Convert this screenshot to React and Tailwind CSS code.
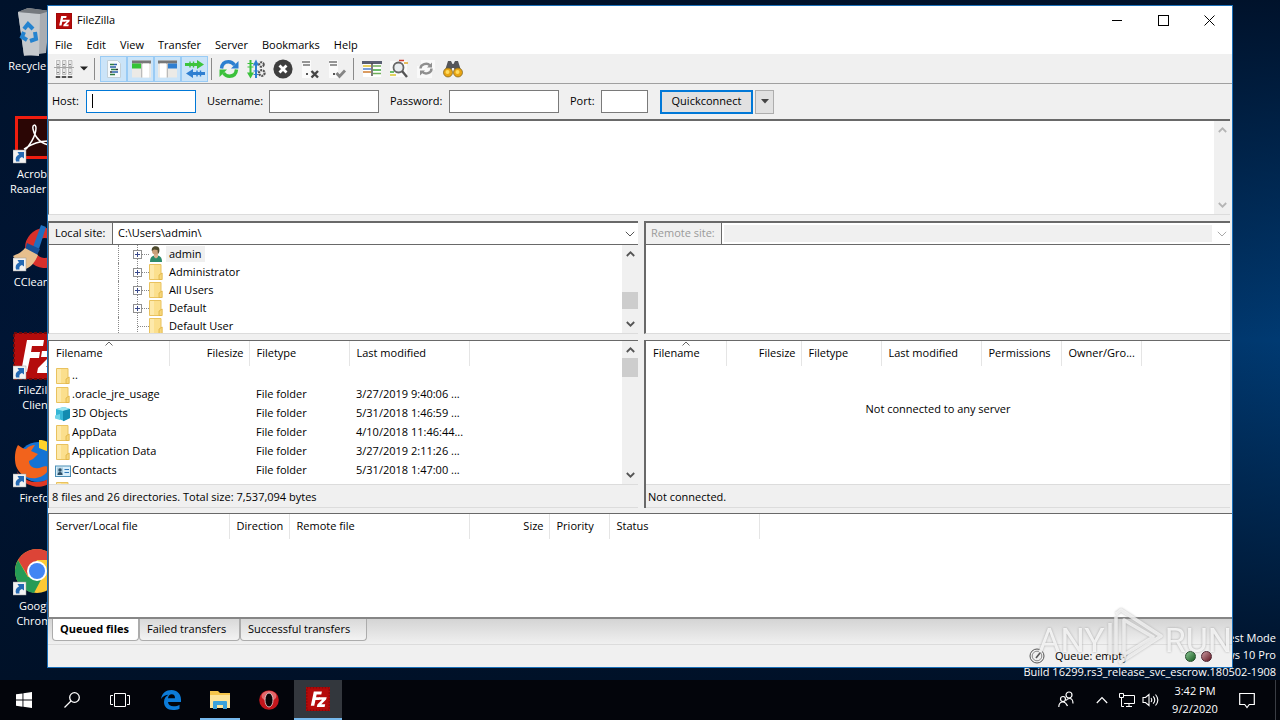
import { useState } from 'react';

const treeItems = [
  { name: 'admin', icon: 'user', expandable: true, selected: true },
  { name: 'Administrator', icon: 'folder', expandable: true },
  { name: 'All Users', icon: 'folder', expandable: true },
  { name: 'Default', icon: 'folder', expandable: true },
  { name: 'Default User', icon: 'folder', expandable: false },
];

const localFiles = [
  { name: '..', icon: 'folder', type: '', modified: '' },
  { name: '.oracle_jre_usage', icon: 'folder', type: 'File folder', modified: '3/27/2019 9:40:06 ...' },
  { name: '3D Objects', icon: 'cube', type: 'File folder', modified: '5/31/2018 1:46:59 ...' },
  { name: 'AppData', icon: 'folder', type: 'File folder', modified: '4/10/2018 11:46:44...' },
  { name: 'Application Data', icon: 'folder', type: 'File folder', modified: '3/27/2019 2:11:26 ...' },
  { name: 'Contacts', icon: 'contact', type: 'File folder', modified: '5/31/2018 1:47:00 ...' },
  { name: '', icon: 'folder', type: '', modified: '' },
];

const localColumns = [
  { label: 'Filename', width: 'w-[120px]', sorted: true },
  { label: 'Filesize', width: 'w-[80px]', right: true },
  { label: 'Filetype', width: 'w-[100px]' },
  { label: 'Last modified', width: 'w-[120px]' },
];

const remoteColumns = [
  { label: 'Filename', width: 'w-[80px]', sorted: true },
  { label: 'Filesize', width: 'w-[75px]', right: true },
  { label: 'Filetype', width: 'w-[80px]' },
  { label: 'Last modified', width: 'w-[100px]' },
  { label: 'Permissions', width: 'w-[80px]' },
  { label: 'Owner/Gro...', width: 'w-[80px]' },
];

const queueColumns = [
  { label: 'Server/Local file', width: 'w-[180px]' },
  { label: 'Direction', width: 'w-[60px]' },
  { label: 'Remote file', width: 'w-[180px]' },
  { label: 'Size', width: 'w-[80px]', right: true },
  { label: 'Priority', width: 'w-[60px]' },
  { label: 'Status', width: 'w-[150px]' },
];

/* ---------- small icons ---------- */

const FileZillaIcon = ({ className }) => (
  <svg viewBox="0 0 16 16" className={className}>
    <rect width="16" height="16" fill="#b50a0a" />
    <rect x=".5" y=".5" width="15" height="15" fill="none" stroke="#8c0606" strokeDasharray="1 1" />
    <path d="M3.2 12.5 5.2 3h5.4l-.4 2H7.1l-.4 1.8h2.6l-.4 1.9H6.3l-.8 3.8z" fill="#fff" />
    <path d="M8.8 6.8h5l-.4 1.6-3.2 3.1h2.6l-.4 1.8H7.2l.4-1.7 3.1-3.1H8.4z" fill="#fff" />
  </svg>
);

const FolderIcon = () => (
  <svg viewBox="0 0 14 16" className="h-4 w-3.5 shrink-0">
    <path d="M.5.5H12v15H.5z" fill="#fbdf8d" stroke="#e9c25f" />
    <path d="M1 1h4v14H1z" fill="#fde9ab" />
    <path d="M13.2 9v6.5H10V11z" fill="#f6d67a" stroke="#dfb343" strokeWidth=".8" />
  </svg>
);

const UserIcon = () => (
  <svg viewBox="0 0 14 16" className="h-4 w-3.5 shrink-0">
    <path d="M1 16c0-5 2-6.500 6-6.500s6 1.500 6 6.500z" fill="#2d8a6b" />
    <path d="M5 8h4v3L7 12.500 5 11z" fill="#d9b18c" />
    <circle cx="6.500" cy="5" r="3.500" fill="#c99f79" />
    <path d="M2.800 5C2.300 1.500 4.500 0 7 .2c3 .2 4 2.500 3.200 5.800L9 8l-.5-4L5 3.500z" fill="#4d4a2c" />
  </svg>
);

const CubeIcon = () => (
  <svg viewBox="0 0 16 16" className="h-4 w-4 shrink-0">
    <path d="m1 3 8-2 6 2v9l-6 3-8-3z" fill="#35b6d6" />
    <path d="m1 3 8-2 6 2-7 2z" fill="#9ce5f2" />
    <path d="M8 5v10.300L15 12V3z" fill="#138bb0" />
    <path d="M0 9.500 5 8v6l-5-1.500z" fill="#6fd3e8" />
  </svg>
);

const ContactIcon = () => (
  <svg viewBox="0 0 16 16" className="h-4 w-4 shrink-0">
    <rect x=".5" y="3" width="15" height="10.500" fill="#d9effa" stroke="#4c8fb5" />
    <rect x="2" y="4.500" width="6" height="7.500" fill="#a9cbdd" />
    <circle cx="5" cy="7" r="1.700" fill="#2d4f66" />
    <path d="M2.500 12c0-2 1-3 2.500-3s2.500 1 2.500 3z" fill="#2d4f66" />
    <path d="M9.500 6.500h4.500M9.500 9.500h4.500" stroke="#2d78b8" strokeWidth="1.200" />
  </svg>
);

const icons = { folder: FolderIcon, user: UserIcon, cube: CubeIcon, contact: ContactIcon };

const Chevron = ({ up, color = '#555' }) => (
  <svg viewBox="0 0 9 6" className="h-1.5 w-[9px]" fill="none" stroke={color} strokeWidth="1.800">
    <path d={up ? 'M.8 5 4.500 1.300 8.200 5' : 'M.8 1 4.500 4.700 8.200 1'} />
  </svg>
);

const ThinChevron = ({ color = '#555' }) => (
  <svg viewBox="0 0 10 6" className="h-1.5 w-2.5" fill="none" stroke={color}>
    <path d="m.8.8 4.200 4.200L9.200.8" />
  </svg>
);

/* ---------- toolbar ---------- */

const SiteManagerIcon = () => (
  <svg viewBox="0 0 20 20" className="size-5">
    <path d="M1 .5h18v16H1z" fill="#fafafa" />
    <g fill="#e6e6e6" stroke="#a8a8a8" strokeWidth=".7">
      <path d="M2.500 1.500h3.500v6H2.500zM8.500 1.500H12v6H8.500zM14.500 1.500H18v6h-3.500zM2.500 9.500h3.500v6H2.500zM8.500 9.500H12v6H8.500zM14.500 9.500H18v6h-3.500z" />
    </g>
    <path d="M0 8.500h20M1 18h18" stroke="#a5a5a5" />
    <path d="M2 17h4v2H2zM8 17h4v2H8zM14 17h4v2h-4z" fill="#555" />
    <path d="M3 5.500h2M9 5.500h2M15 5.500h2M3 13.500h2M9 13.500h2M15 13.500h2" stroke="#888" />
  </svg>
);

const LogIcon = () => (
  <svg viewBox="0 0 20 20" className="size-5">
    <path d="M3.500 1.500h10l3 3v14h-13z" fill="#f6fafc" stroke="#c3d0d8" />
    <g strokeWidth="1.400">
      <path d="M6 5.500h4M7 10.500h5M6 15.500h5" stroke="#2c7a3f" />
      <path d="M10 5.500h3M6 8h6M8 13h6" stroke="#2d5fa8" />
      <path d="M6 13h2M12 10.500h2" stroke="#333" />
    </g>
  </svg>
);

const LocalTreeIcon = () => (
  <svg viewBox="0 0 20 20" className="size-5">
    <rect x="1" y="1.500" width="19" height="17" fill="#eceae6" />
    <path d="M1 1.500h19v3H1z" fill="#777" />
    <path d="M1 4.500h9v5H1z" fill="#35c435" />
    <path d="M12 4.500h6v14h-6z" fill="#fff" />
    <path d="M10.500 4.500v14" stroke="#bbb" />
  </svg>
);

const RemoteTreeIcon = () => (
  <svg viewBox="0 0 20 20" className="size-5">
    <rect x="0" y="1.500" width="19" height="17" fill="#eceae6" />
    <path d="M0 1.500h19v3H0z" fill="#777" />
    <path d="M10 4.500h9v5h-9z" fill="#2f7fd1" />
    <path d="M2 4.500h6v14H2z" fill="#fff" />
    <path d="M9.500 4.500v14" stroke="#bbb" />
  </svg>
);

const QueueIcon = () => (
  <svg viewBox="0 0 20 20" className="size-5">
    <path d="M0 4h12V1l7 4.500-7 4.500V7H0z" fill="#3cc43c" />
    <path d="M20 13H8v-3l-7 4.500L8 19v-3h12z" fill="#2f7fd1" />
    <path d="M5 2.500v6M8.500 2.500v6" stroke="#3cc43c" strokeWidth="1.400" />
    <path d="M12 11.500v6M15.500 11.500v6" stroke="#2f7fd1" strokeWidth="1.400" />
  </svg>
);

const RefreshIcon = () => (
  <svg viewBox="0 0 20 20" className="size-5" fill="none" strokeWidth="3.400">
    <path d="M2.500 9.500C3 4.500 6 2.800 9.500 2.800c2.500 0 4.500 1.200 6 3.200" stroke="#2b7fd0" />
    <path d="M19.500 2v7.500H12z" fill="#2b7fd0" />
    <path d="M17.500 10.500c-.5 5-3.500 6.700-7 6.700-2.500 0-4.500-1.200-6-3.200" stroke="#3bc13b" />
    <path d="M.5 18v-7.500H8z" fill="#3bc13b" />
  </svg>
);

const ProcessIcon = () => (
  <svg viewBox="0 0 20 20" className="size-5">
    <path d="M3.500 1h2v12.500H8L4.500 19.500 1 13.500h2.500z" fill="#3bc13b" />
    <path d="M9 19V6.500H6.800L10 .5l3 6h-2V19z" fill="#2b7fd0" />
    <path d="M1.500 4.500h6M1.500 8h6" stroke="#3bc13b" />
    <path d="M7.500 12h5M7.500 15.500h5" stroke="#2b7fd0" />
    <circle cx="15.500" cy="5.500" r="2.300" fill="none" stroke="#555" strokeWidth="2" strokeDasharray="2 .8" />
    <circle cx="15.800" cy="14" r="2.800" fill="none" stroke="#555" strokeWidth="2.200" strokeDasharray="2 .8" />
  </svg>
);

const CancelIcon = () => (
  <svg viewBox="0 0 20 20" className="size-5">
    <circle cx="10" cy="10" r="9.600" fill="#3e3e3e" />
    <path d="m6.500 6.500 7 7m0-7-7 7" stroke="#fff" strokeWidth="2.800" />
  </svg>
);

const DisconnectIcon = () => (
  <svg viewBox="0 0 20 20" className="size-5">
    <path d="M2 1h9v18H2z" fill="#fbfbfb" />
    <path d="M2 3h8M3 6h7" stroke="#777" strokeWidth="1.400" />
    <path d="M6 15h2" stroke="#555" strokeWidth="2" />
    <path d="m11.500 12 6.500 6.500m0-6.500-6.500 6.500" stroke="#444" strokeWidth="2.400" />
  </svg>
);

const ReconnectIcon = () => (
  <svg viewBox="0 0 20 20" className="size-5">
    <path d="M2 1h9v18H2z" fill="#fbfbfb" />
    <path d="M2 3h8M3 6h7" stroke="#777" strokeWidth="1.400" />
    <path d="M6 15h2" stroke="#555" strokeWidth="2" />
    <path d="m9.500 14 3 3.500 5.500-6" fill="none" stroke="#858585" strokeWidth="2.800" />
  </svg>
);

const FilterIcon = () => (
  <svg viewBox="0 0 20 20" className="size-5">
    <path d="M1 3h18v15H1z" fill="#fff" />
    <path d="M0 2h20v3H0z" fill="#5a5f72" />
    <path d="M1 7h8" stroke="#e2c32b" strokeWidth="1.500" />
    <path d="M1 10h8" stroke="#4d7fd0" strokeWidth="1.500" />
    <path d="M1 13h8" stroke="#cf7b2e" strokeWidth="1.500" />
    <path d="M11 7h8M11 14.500h8" stroke="#6fae5a" strokeWidth="1.500" />
    <path d="M11 11h8" stroke="#3ba83b" strokeWidth="1.500" />
    <path d="M10 4v13" stroke="#444" strokeWidth="1.400" />
  </svg>
);

const CompareIcon = () => (
  <svg viewBox="0 0 20 20" className="size-5">
    <path d="M1 2h17v16H1z" fill="#fafafa" />
    <path d="M10 1.500h5" stroke="#d33b2c" strokeWidth="1.500" />
    <path d="M15 4h4" stroke="#e0a92c" strokeWidth="1.500" />
    <path d="M1 13h4" stroke="#3ba83b" strokeWidth="1.500" />
    <path d="M1 16h6" stroke="#d8c52c" strokeWidth="1.500" />
    <circle cx="9.500" cy="8.500" r="5" fill="#e9edf0" stroke="#666" strokeWidth="1.800" />
    <path d="m13 12 5 6" stroke="#555" strokeWidth="2.400" />
  </svg>
);

const SyncIcon = () => (
  <svg viewBox="0 0 20 20" className="size-5" fill="none">
    <path d="M5 1h14v10h-3v8H1V7h4z" fill="#f9f9f9" />
    <path d="M4.500 9.500c0-4 6.500-6.500 9.500-3M15.500 9.500c0 5-6.500 6.500-9.500 3" stroke="#8f8f8f" strokeWidth="2.400" />
    <path d="M16 3.500v5h-5zM4 16.500v-5h5z" fill="#8f8f8f" />
  </svg>
);

const SearchIcon = () => (
  <svg viewBox="0 0 20 20" className="size-5">
    <path d="M5 2h3l1.500 3h1L12 2h3l3.500 11H12l-1-4H9l-1 4H1.500z" fill="#55565a" />
    <circle cx="5" cy="13.500" r="4.500" fill="#e8a413" stroke="#77601f" strokeWidth=".7" />
    <circle cx="15" cy="13.500" r="4.500" fill="#e8a413" stroke="#77601f" strokeWidth=".7" />
    <circle cx="4.500" cy="13" r="2" fill="#ffdc5e" />
    <circle cx="14.500" cy="13" r="2" fill="#ffdc5e" />
  </svg>
);

const toggles = [
  { label: 'Message log', Icon: LogIcon },
  { label: 'Local directory tree', Icon: LocalTreeIcon },
  { label: 'Remote directory tree', Icon: RemoteTreeIcon },
  { label: 'Transfer queue', Icon: QueueIcon },
];

const actions = [
  { label: 'Refresh', Icon: RefreshIcon },
  { label: 'Process queue', Icon: ProcessIcon },
  { label: 'Cancel', Icon: CancelIcon },
  { label: 'Disconnect', Icon: DisconnectIcon },
  { label: 'Reconnect', Icon: ReconnectIcon },
];

const tools = [
  { label: 'Filters', Icon: FilterIcon },
  { label: 'Directory comparison', Icon: CompareIcon },
  { label: 'Synchronized browsing', Icon: SyncIcon },
  { label: 'Find files', Icon: SearchIcon },
];

const ToolButton = ({ label, Icon }) => (
  <button aria-label={label} className="flex h-full w-[27px] items-center justify-center hover:bg-[#d8e6f2]">
    <Icon />
  </button>
);

const Toolbar = () => {
  const [active, setActive] = useState(toggles.map((t) => t.label));

  const toggle = (label) =>
    setActive(active.includes(label) ? active.filter((l) => l !== label) : [...active, label]);

  return (
    <div className="flex h-[30px] shrink-0 items-center border-b border-[#a0a0a0] bg-[#f0f0f0] py-0.5 pl-1.5">
      <button aria-label="Site Manager" className="flex h-full items-center gap-1.5">
        <SiteManagerIcon />
        <svg viewBox="0 0 8 5" className="h-[5px] w-2">
          <path d="M0 .5h8L4 4.500z" fill="#222" />
        </svg>
      </button>
      <div className="ml-1.5 mr-[5px] h-[22px] w-px bg-[#8a8a8a]" />
      {toggles.map(({ label, Icon }) => (
        <button
          key={label}
          aria-label={label}
          aria-pressed={active.includes(label)}
          onClick={() => toggle(label)}
          className={`flex h-[26px] w-[27px] items-center justify-center ${active.includes(label) ? 'border border-[#99cbf5] bg-[#cbe4f8]' : ''
            }`}
        >
          <Icon />
        </button>
      ))}
      <div className="mx-[3px] h-[22px] w-px bg-[#8a8a8a]" />
      {actions.map((a) => (
        <ToolButton key={a.label} {...a} />
      ))}
      <div className="ml-[3px] mr-1 h-[22px] w-px bg-[#8a8a8a]" />
      {tools.map((t) => (
        <ToolButton key={t.label} {...t} />
      ))}
    </div>
  );
};

const QuickConnect = () => {
  const [host, setHost] = useState('');

  return (
    <form className="flex h-[35px] shrink-0 items-center bg-[#f0f0f0] pl-1" onSubmit={(e) => e.preventDefault()}>
      <label htmlFor="host" className="w-[34px]">Host:</label>
      <div className="relative">
        <input
          id="host"
          value={host}
          onChange={(e) => setHost(e.target.value)}
          className="block h-[23px] w-[110px] border border-[#0078d7] bg-white px-1 outline-none"
        />
        {/* text cursor */}
        {!host && <span className="pointer-events-none absolute left-1.5 top-1 h-3.5 w-px bg-black" />}
      </div>
      <label htmlFor="username" className="ml-[11px] w-[62px]">Username:</label>
      <input id="username" className="h-[23px] w-[110px] border border-[#7a7a7a] bg-white px-1 outline-none" />
      <label htmlFor="password" className="ml-[11px] w-[59px]">Password:</label>
      <input id="password" type="password" className="h-[23px] w-[110px] border border-[#7a7a7a] bg-white px-1 outline-none" />
      <label htmlFor="port" className="ml-[11px] w-[31px]">Port:</label>
      <input id="port" className="h-[23px] w-[47px] border border-[#7a7a7a] bg-white px-1 outline-none" />
      <button type="submit" className="ml-3 h-6 w-[93px] border-2 border-[#0078d7] bg-[#e1e1e1]">
        Quickconnect
      </button>
      <button type="button" aria-label="Recent servers" className="ml-0.5 flex h-6 w-[19px] items-center justify-center border border-[#adadad] bg-[#e1e1e1]">
        <svg viewBox="0 0 8 5" className="h-[5px] w-2">
          <path d="M0 0h8L4 4.500z" fill="#444" />
        </svg>
      </button>
    </form>
  );
};

/* ---------- panes ---------- */

// thumb is a height + top margin pair, given by the caller as classes
const Scrollbar = ({ thumb, disabled }) => (
  <div className="flex w-4 shrink-0 flex-col items-center justify-between bg-[#f0f0f0] py-1.5">
    <Chevron up color={disabled ? '#b5b5b5' : '#555'} />
    {thumb && (
      <div className="flex w-full flex-1 flex-col">
        <div className={`w-full bg-[#cdcdcd] ${thumb}`} />
      </div>
    )}
    <Chevron color={disabled ? '#b5b5b5' : '#555'} />
  </div>
);

const HeaderRow = ({ columns }) => (
  <thead>
    <tr className="h-[25px]">
      {columns.map((c) => (
        <th
          key={c.label}
          className={`relative border-r border-[#e5e5e5] pl-[7px] pr-[5px] font-normal ${c.width} ${c.right ? 'text-right' : 'text-left'}`}
        >
          {c.sorted && (
            <svg viewBox="0 0 8 5" className="absolute left-1/2 top-0 h-[5px] w-2 -translate-x-1/2" fill="none" stroke="#666">
              <path d="M.5 4.500 4 1l3.500 3.500" />
            </svg>
          )}
          {c.label}
        </th>
      ))}
    </tr>
  </thead>
);

const SiteTree = () => (
  <ul className="flex-1 overflow-hidden pl-[69px]">
    {treeItems.map(({ name, icon, expandable, selected }) => {
      const Icon = icons[icon];
      return (
        <li key={name} className="flex h-[18px] items-center border-l border-dotted border-[#888] pl-3.5">
          <svg viewBox="0 0 16 18" className="h-[18px] w-4 shrink-0" fill="none">
            <path d="M4.500 0v18M5 9.500h11" stroke="#888" strokeDasharray="1 1" />
            {expandable && (
              <>
                <rect x=".5" y="5.500" width="8" height="8" fill="#fff" stroke="#919191" />
                <path d="M2 9.500h5M4.500 7v5" stroke="#3a4a8c" />
              </>
            )}
          </svg>
          <Icon />
          <span className={`ml-[3px] px-[3px] leading-4 ${selected ? 'bg-[#f0f0f0]' : ''}`}>{name}</span>
        </li>
      );
    })}
  </ul>
);

const LocalPane = () => (
  <section className="flex min-w-0 flex-col gap-1.5">
    <div className="flex h-[113px] flex-col border-b border-l border-t-2 border-b-[#dcdcdc] border-l-[#696969] border-t-[#696969] bg-white">
      <div className="flex h-[22px] shrink-0 items-stretch border-b border-[#696969]">
        <label htmlFor="localSite" className="flex w-16 items-center border-r border-[#696969] bg-[#f0f0f0] pl-1.5">
          Local site:
        </label>
        <input id="localSite" defaultValue="C:\Users\admin\" className="min-w-0 flex-1 px-[5px] outline-none" />
        <button aria-label="Show path history" className="flex w-4 items-center justify-center">
          <ThinChevron />
        </button>
      </div>
      <div className="flex min-h-0 flex-1">
        <SiteTree />
        <Scrollbar thumb="mt-[35px] h-[17px]" />
      </div>
    </div>
    <div className="flex h-[168px] flex-col border-l border-t border-[#696969] bg-white">
      <div className="flex min-h-0 flex-1">
        <div className="min-w-0 flex-1 overflow-hidden">
          <table className="w-[420px] table-fixed border-collapse">
            <HeaderRow columns={localColumns} />
            <tbody>
              {localFiles.map((file, i) => {
                const Icon = icons[file.icon];
                return (
                  <tr key={i} className="h-[19px]">
                    <td className="p-0 pl-1">
                      <div className="flex h-[19px] items-center whitespace-nowrap">
                        <span className="flex w-[19px] justify-center"><Icon /></span>
                        {file.name}
                      </div>
                    </td>
                    <td />
                    <td className="p-0 pl-[7px]">{file.type}</td>
                    <td className="whitespace-nowrap p-0 pl-[7px]">{file.modified}</td>
                  </tr>
                );
              })}
            </tbody>
          </table>
        </div>
        <Scrollbar thumb="mt-[5px] h-[19px]" />
      </div>
      <div className="flex h-6 shrink-0 items-center border-y border-[#dcdcdc] bg-[#f0f0f0] pl-[3px] pt-0.5">
        8 files and 26 directories. Total size: 7,537,094 bytes
      </div>
    </div>
  </section>
);

const RemotePane = () => (
  <section className="flex min-w-0 flex-col gap-1.5">
    <div className="flex h-[113px] flex-col border-b border-l-2 border-t-2 border-b-[#dcdcdc] border-l-[#696969] border-t-[#696969] bg-white">
      <div className="flex h-[22px] shrink-0 items-stretch border-b border-[#696969]">
        <label htmlFor="remoteSite" className="flex w-[76px] items-center border-r border-[#696969] bg-[#f0f0f0] pl-[5px] text-[#9a9a9a]">
          Remote site:
        </label>
        <div className="flex flex-1 p-0.5">
          <input id="remoteSite" disabled className="min-w-0 flex-1 bg-[#f0f0f0]" />
        </div>
        <button disabled aria-label="Show remote history" className="flex w-4 items-center justify-center">
          <ThinChevron color="#aaa" />
        </button>
      </div>
    </div>
    <div className="flex h-[168px] flex-col border-l-2 border-t border-[#696969] bg-white">
      <div className="flex min-h-0 flex-1 flex-col">
        <table className="w-[495px] table-fixed border-collapse">
          <HeaderRow columns={remoteColumns} />
        </table>
        <p className="pt-[35px] text-center leading-4">Not connected to any server</p>
      </div>
      <div className="flex h-6 shrink-0 items-center border-y border-[#dcdcdc] bg-[#f0f0f0] pl-0.5 pt-0.5">
        Not connected.
      </div>
    </div>
  </section>
);

const queueTabs = [
  { label: 'Queued files', width: 'w-[87px]' },
  { label: 'Failed transfers', width: 'w-[101px]' },
  { label: 'Successful transfers', width: 'w-[127px]' },
];

const QueuePane = () => {
  const [tab, setTab] = useState('Queued files');

  return (
    <section className="mt-[5px] flex min-h-0 flex-1 flex-col">
      <div className="flex-1 border-l border-t border-[#696969] bg-white">
        <table className="w-[710px] table-fixed border-collapse">
          <HeaderRow columns={queueColumns} />
        </table>
      </div>
      <div className="flex h-7 items-start border-b border-t-2 border-b-[#dcdcdc] border-t-[#868686] bg-linear-to-b from-[#d4d4d4] to-[#f0f0f0] pl-1">
        {queueTabs.map(({ label, width }) => (
          <button
            key={label}
            onClick={() => setTab(label)}
            className={`h-[22px] rounded-b-sm border border-t-0 border-[#acacac] pl-[7px] text-left ${width} ${tab === label ? 'bg-white font-bold' : 'bg-linear-to-b from-[#d9d9d9] to-[#f3f3f3]'
              }`}
          >
            {label}
          </button>
        ))}
      </div>
    </section>
  );
};

const Watermark = () => (
  <div className="pointer-events-none absolute bottom-0 right-0 flex h-[60px] items-center gap-0.5 text-[34px] leading-none text-white/80">
    <span className="pt-1.5 font-['Roboto'] drop-shadow-[0_0_1px_#999]">ANY</span>
    <svg viewBox="0 0 56 60" className="h-[60px] w-14 drop-shadow-[0_0_1px_#999]" fill="none" stroke="#fff" strokeOpacity=".7" strokeWidth="3.500" strokeLinejoin="round">
      <path d="M3 16v32M9 10v38M9 7l5-4 40 26-42 27M17 50V13l29 17-29 18" />
    </svg>
    <span className="pt-1.5 font-['Roboto'] drop-shadow-[0_0_1px_#999]">RUN</span>
  </div>
);

const FileZillaWindow = () => (
  <main className="absolute inset-x-[47px] bottom-3 top-[5px] flex flex-col border border-[#1a6fb8] bg-[#f0f0f0] text-black">
    <header className="flex h-[29px] shrink-0 items-center bg-white pl-2">
      <FileZillaIcon className="size-4" />
      <h1 className="ml-[5px] flex-1">FileZilla</h1>
      <button aria-label="Minimize" className="flex h-full w-[45px] items-center justify-center">
        <svg viewBox="0 0 11 11" className="size-[11px]" stroke="#000"><path d="M0 5.500h10" /></svg>
      </button>
      <button aria-label="Maximize" className="flex h-full w-[46px] items-center justify-center">
        <svg viewBox="0 0 11 11" className="size-[11px]" fill="none" stroke="#000"><rect x=".5" y=".5" width="10" height="10" /></svg>
      </button>
      <button aria-label="Close" className="flex h-full w-[46px] items-center justify-center">
        <svg viewBox="0 0 11 11" className="size-[11px]" stroke="#000"><path d="m.5.500 10 10m0-10-10 10" /></svg>
      </button>
    </header>
    <nav className="flex h-[19px] shrink-0 items-center gap-3.5 bg-white pl-[7px] pt-0.5">
      {['File', 'Edit', 'View', 'Transfer', 'Server', 'Bookmarks', 'Help'].map((item) => (
        <button key={item}>{item}</button>
      ))}
    </nav>
    <Toolbar />
    <QuickConnect />
    <div className="mr-0.5 flex h-24 shrink-0 border-b border-l border-t-2 border-b-[#dcdcdc] border-l-[#696969] border-t-[#696969] bg-white">
      <div className="flex-1" role="log" />
      <Scrollbar disabled />
    </div>
    <div className="mr-0.5 mt-1.5 grid grid-cols-[590fr_586fr] gap-1.5">
      <LocalPane />
      <RemotePane />
    </div>
    <QueuePane />
    <footer className="flex h-[22px] shrink-0 items-center justify-end pr-2">
      <svg viewBox="0 0 16 16" className="size-4" fill="none" stroke="#555">
        <circle cx="8" cy="8" r="7" />
        <circle cx="8" cy="8" r="4.800" stroke="#888" />
        <path d="m7 10 4-5" strokeWidth="1.600" />
      </svg>
      <span className="ml-2.5 w-[130px]">Queue: empty</span>
      <span className="size-[11px] rounded-full border border-[#244d2b] bg-linear-to-br from-[#8ac694] to-[#145c20]" />
      <span className="ml-[5px] mr-3 size-[11px] rounded-full border border-[#4d2430] bg-linear-to-br from-[#c99aa2] to-[#611424]" />
    </footer>
    <Watermark />
  </main>
);

/* ---------- desktop ---------- */

const desktopIcons = [
  {
    lines: ['Recycle Bin'],
    art: (
      <>
        <path d="m5 4 10-4 22 3-4 42-22 3z" fill="#a9adb2" />
        <path d="m5 4 22 2-1 42-15-1z" fill="#c5c9cd" />
        <path d="m5 4 10-4 22 3-10 3z" fill="#75797e" />
        <path d="m11 21 4-5 5 5M22 24l1 7-6 2M14 32l-5-3 2-5" fill="none" stroke="#2583cf" strokeWidth="4" />
      </>
    ),
  },
  {
    lines: ['Acrobat', 'Reader DC'],
    shortcut: true,
    art: (
      <>
        <rect x="3.500" y="1.500" width="42" height="40" fill="#2b0605" stroke="#f01d0f" strokeWidth="3" />
        <path d="M10 36c6-5 13-16 13-24 0-4-4-4-3 1 2 9 9 16 18 16 5-1 3-4-3-4-9 0-18 4-24 8" fill="none" stroke="#fff" strokeWidth="1.500" />
      </>
    ),
  },
  {
    lines: ['CCleaner'],
    shortcut: true,
    art: (
      <>
        <path d="M44 8A20 20 0 1 0 44 40l-8-7a10 10 0 1 1 0-18z" fill="#d8302b" />
        <path d="m28 1 5 2-7 22-6-2z" fill="#1f6fc0" />
        <path d="m14 19 13 6-3 6-12-5z" fill="#174f96" />
        <path d="M12 24c-4 5-8 6-12 8l10 14c8-2 12-8 15-15z" fill="#e7bf8d" />
      </>
    ),
  },
  {
    lines: ['FileZilla', 'Client'],
    shortcut: true,
    art: (
      <>
        <rect x="1" y="1" width="46" height="46" fill="#b40c0c" stroke="#6f0a0a" strokeWidth="2" strokeDasharray="3 2" />
        <path d="m8 40 6-32h17l-1 6H19l-1 6h9l-1 6h-9l-3 14z" fill="#fff" />
        <path d="M29 19h15l-1 5-10 11h8l-1 6H24l1-5 11-11h-8z" fill="#fff" />
      </>
    ),
  },
  {
    lines: ['Firefox'],
    shortcut: true,
    art: (
      <>
        <circle cx="25" cy="22" r="20" fill="#1473d4" />
        <path d="M26 0c10-1 21 10 19 24l-9-12-10-4z" fill="#ffd32a" />
        <path d="M5 5c3 2 5 4 8 4 3-3 6-4 9-4l-4 6 7 3-5 5-4 2c0 6 6 9 13 6 5-2 9 1 5 5-8 10-26 8-31-6C1 18 2 10 5 5z" fill="#f2631c" />
        <path d="M4 31c6 10 17 13 27 10 7-3 12-9 13-16 4 16-14 26-27 20C11 43 6 39 4 31z" fill="#e03824" />
      </>
    ),
  },
  {
    lines: ['Google', 'Chrome'],
    shortcut: true,
    art: (
      <>
        <circle cx="24" cy="23" r="22" fill="#fcc934" />
        <path d="M5 12a22 22 0 0 1 38 0H24l-9 16z" fill="#dc4437" />
        <path d="M5 12a22 22 0 0 0 16 33l9-17-15 1z" fill="#259b56" />
        <circle cx="24" cy="23" r="10" fill="#fff" />
        <circle cx="24" cy="23" r="8" fill="#4285f4" />
      </>
    ),
  },
];

const DesktopIcons = () => (
  <ul className="flex w-[74px] flex-col pt-2">
    {desktopIcons.map(({ lines, art, shortcut }) => (
      <li key={lines[0]} className="flex h-[108px] flex-col items-center">
        <svg viewBox="0 0 48 48" className="size-12 shrink-0">
          {art}
          {shortcut && (
            <>
              <rect x="0" y="34" width="13" height="13" fill="#f2f2f2" stroke="#999" strokeWidth=".5" />
              <path d="M3 45.500c-1-3.500 0-5.500 3-7L4.500 36H11v6.500L9 41c-2.500 1-3 2-2.500 4.500z" fill="#2469b3" />
            </>
          )}
        </svg>
        <div className="pt-0.5 text-center leading-[15px] whitespace-nowrap">
          {lines.map((line) => (
            <div key={line}>{line}</div>
          ))}
        </div>
      </li>
    ))}
  </ul>
);

const Taskbar = () => (
  <footer className="flex h-10 shrink-0 items-stretch bg-[#03050b]">
    <button aria-label="Start" className="flex w-12 items-center justify-center">
      <svg viewBox="0 0 16 16" className="size-4" fill="#fff">
        <path d="m0 2.300 6.500-.9v6.200H0zM7.400 1.300 16 0v7.600H7.400zM0 8.500h6.500v6.200L0 13.800zM7.400 8.500H16V16l-8.600-1.200z" />
      </svg>
    </button>
    <button aria-label="Search" className="flex w-12 items-center justify-center">
      <svg viewBox="0 0 16 16" className="size-4" fill="none" stroke="#fff" strokeWidth="1.300">
        <circle cx="10.500" cy="5.500" r="4.800" />
        <path d="M7 9 .5 15.500" />
      </svg>
    </button>
    <button aria-label="Task view" className="flex w-12 items-center justify-center">
      <svg viewBox="0 0 20 16" className="h-4 w-5" fill="none" stroke="#fff">
        <path d="M4.500 1.500h11v13h-11zM3 3.500H.5v9H3M17 3.500h2.500v9H17" />
      </svg>
    </button>
    <button aria-label="Microsoft Edge" className="ml-[3px] flex w-12 items-center justify-center">
      <svg viewBox="0 0 20 20" className="size-5">
        <path d="M0 9C1 3 5 0 10.500 0 16 0 20 4 20 9.500V12H7c.3 3 2.500 4.300 5.500 4.300 2.500 0 4.500-.6 6-1.600v4c-2 1-4 1.300-6.500 1.300-6 0-9-3.500-9-8 0-3.500 2-6 4.500-7.200C5 5 2 6 0 9zm7-.8h7c0-2.700-1-4-3.300-4C8.800 4.200 7.300 5.500 7 8.200z" fill="#0c7cd9" />
      </svg>
    </button>
    <button aria-label="File Explorer" className="ml-[5px] flex w-10 flex-col">
      <span className="flex flex-1 items-center justify-center pt-0.5">
        <svg viewBox="0 0 22 18" className="h-[18px] w-[22px]">
          <path d="M1 0h8l2 2h10v15H1z" fill="#f5c64b" />
          <path d="M1 4h20v13H1z" fill="#fde59a" />
          <path d="M4 11q0-1 1-1h12q1 0 1 1v7h-4v-4H8v4H4z" fill="#3ba2db" />
        </svg>
      </span>
      <span className="h-0.5 bg-[#76b9ed]" />
    </button>
    <button aria-label="Opera" className="ml-[5px] flex w-12 items-center justify-center">
      <svg viewBox="0 0 20 20" className="size-5">
        <circle cx="10" cy="10" r="9.800" fill="#c4161c" />
        <ellipse cx="10" cy="6" rx="7.500" ry="5" fill="#e4686b" />
        <ellipse cx="10" cy="10" rx="4" ry="7" fill="#0b0508" stroke="#f0dcdc" strokeWidth=".8" />
      </svg>
    </button>
    <button aria-label="FileZilla" className="ml-px flex w-12 flex-col bg-[#33373d]">
      <span className="flex flex-1 items-center justify-center">
        <FileZillaIcon className="size-6" />
      </span>
      <span className="h-0.5 bg-[#76b9ed]" />
    </button>
    <div className="flex-1" />
    <div className="flex items-center text-white">
      <svg viewBox="0 0 16 18" className="h-[18px] w-4" fill="none" stroke="#fff" strokeWidth="1.200">
        <circle cx="11" cy="4" r="3" />
        <circle cx="5" cy="8" r="2.500" />
        <path d="M.8 16c0-3 1.500-5 4.200-5s3.500 2 4.500 4M8 9.500c1-1.500 2-2 3.500-2 2.500 0 3.500 2 3.500 5" />
      </svg>
      <svg viewBox="0 0 12 8" className="ml-[22px] h-2 w-3" fill="none" stroke="#fff" strokeWidth="1.200">
        <path d="m.8 7 5.200-5.500L11.200 7" />
      </svg>
      <svg viewBox="0 0 17 16" className="ml-2.5 h-4 w-[17px]" fill="none" stroke="#fff">
        <path d="M5 3.500h11.500v8H6M8 14.500h6M11 12v2.500M1.500 1.500h4v4h-4zM3.500 5.500v9H6" />
      </svg>
      <svg viewBox="0 0 17 16" className="ml-[7px] h-4 w-[17px]" fill="none" stroke="#fff" strokeWidth="1.100">
        <path d="M1 5.500h2.500L7 2.500v11l-3.500-3H1zM9 6c1 1.300 1 2.700 0 4M11.200 4.300c2 2.300 2 5 0 7.400M13.500 2.500c3 3.500 3 7.500 0 11" />
      </svg>
      <time className="ml-3 w-12 whitespace-nowrap text-center leading-[18px]">
        3:42 PM
        <br />
        9/2/2020
      </time>
      <button aria-label="Notifications" className="ml-5 mr-5">
        <svg viewBox="0 0 16 17" className="h-[17px] w-4" fill="none" stroke="#fff" strokeWidth="1.200">
          <path d="M.7 1.500h14.600v11h-5L8 15.500l-2.300-3h-5z" />
        </svg>
      </button>
      <span className="mr-1 h-full w-px bg-[#3a3d44]" />
    </div>
  </footer>
);

const App = () => (
  <div className="flex h-screen flex-col overflow-hidden bg-[#00122b] font-['Open_Sans','Noto_Sans',sans-serif] text-[11px] text-white">
    <div className="relative min-h-0 flex-1 overflow-hidden bg-linear-to-r from-[#001534] via-[#001c40] to-[#003a72]">
      {/* darker top and bottom of the wallpaper */}
      <div className="absolute inset-0 bg-linear-to-b from-[#00122b] via-transparent to-[#001128]" />
      <div className="relative flex h-full items-start justify-between">
        <DesktopIcons />
        <p className="self-end pr-1 text-right leading-[17px]">
          Test Mode
          <br />
          Windows 10 Pro
          <br />
          Build 16299.rs3_release_svc_escrow.180502-1908
        </p>
      </div>
      <FileZillaWindow />
    </div>
    <Taskbar />
  </div>
);

export default App;
